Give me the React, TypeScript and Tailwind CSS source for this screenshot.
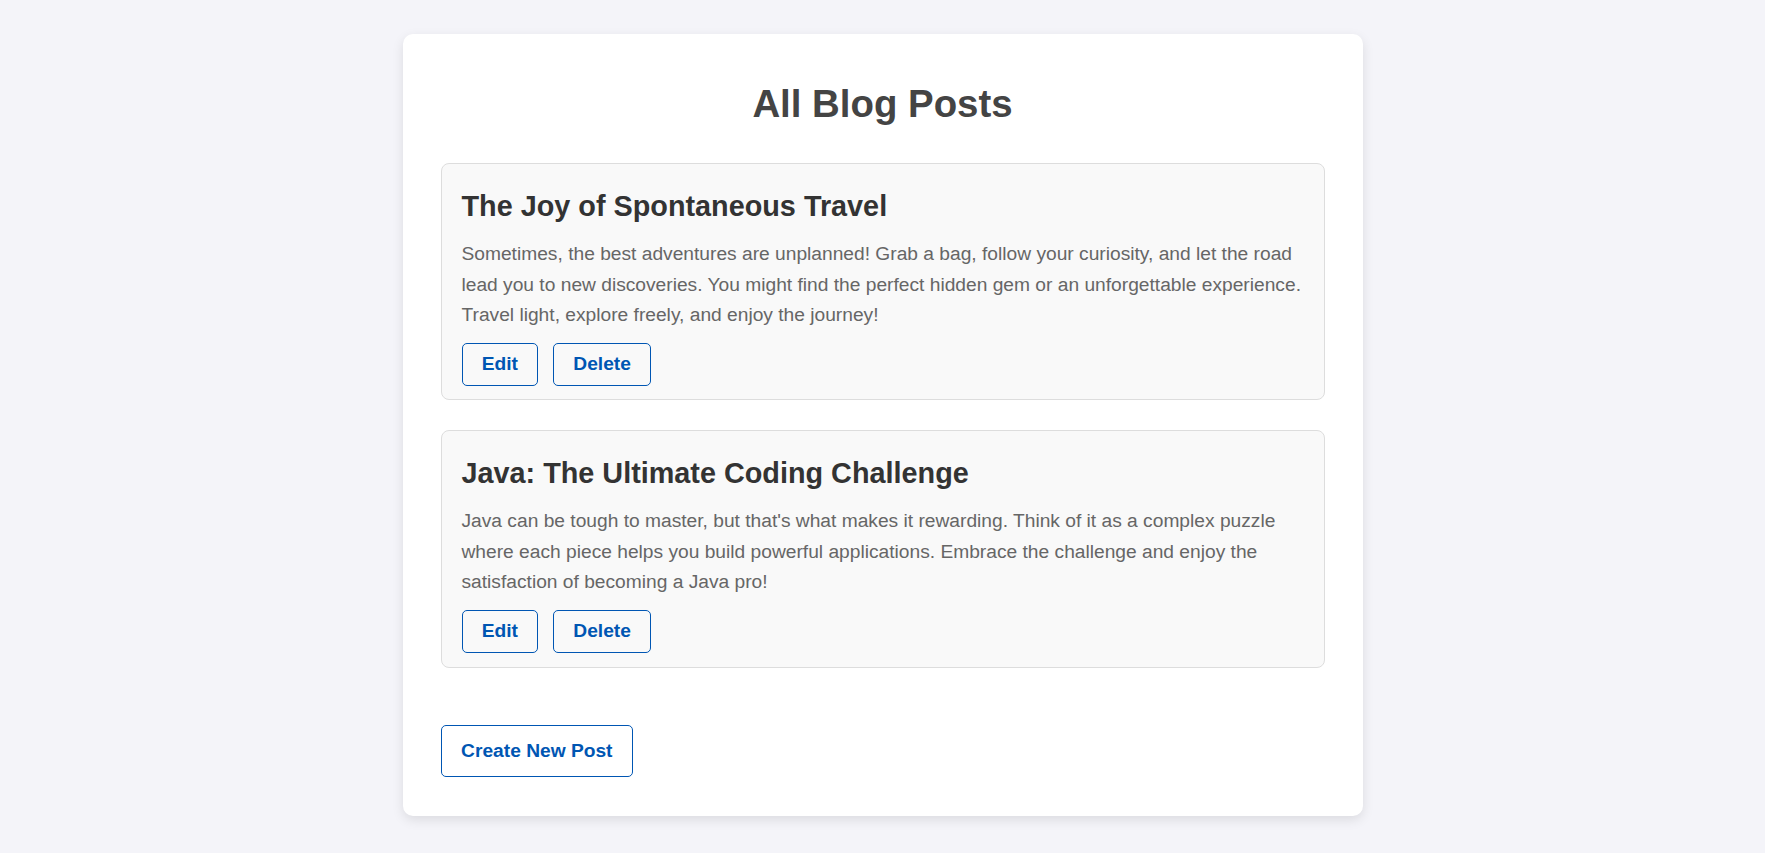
import React from "react";

const posts = [
  {
    title: "The Joy of Spontaneous Travel",
    body:
      "Sometimes, the best adventures are unplanned! Grab a bag, follow your curiosity, and let the road lead you to new discoveries. You might find the perfect hidden gem or an unforgettable experience. Travel light, explore freely, and enjoy the journey!",
  },
  {
    title: "Java: The Ultimate Coding Challenge",
    body:
      "Java can be tough to master, but that's what makes it rewarding. Think of it as a complex puzzle where each piece helps you build powerful applications. Embrace the challenge and enjoy the satisfaction of becoming a Java pro!",
  },
];

function PostCard({ title, body }: { title: string; body: string }) {
  return (
    <div className="rounded-[8px] border border-[#dddddd] bg-[#f9f9f9] px-[20px] pt-[15px] pb-[13.5px]">
      <h2 className="mt-[11px] mb-[16.5px] text-[28.8px] leading-[33px] font-bold text-[#333333]">
        {title}
      </h2>
      <p className="m-0 text-[19.2px] leading-[30.4px] text-[#666666]">{body}</p>
      <div className="mt-[12px] flex gap-[15px]">
        <button className="rounded-[5px] border border-[#0056b3] bg-transparent px-[19.2px] py-[9.7px] text-[19.2px] leading-[22px] font-bold text-[#0056b3]">
          Edit
        </button>
        <button className="rounded-[5px] border border-[#0056b3] bg-transparent px-[19.2px] py-[9.7px] text-[19.2px] leading-[22px] font-bold text-[#0056b3]">
          Delete
        </button>
      </div>
    </div>
  );
}

export default function App() {
  return (
    <div className="min-h-screen bg-[#f4f4f9] pt-[34px] pb-[37px] font-['Liberation_Sans',Arial,sans-serif]">
      <div className="mx-auto w-[960px] rounded-[10px] bg-white px-[38px] pt-[38.4px] pb-[39.4px] shadow-[0_4px_12px_rgba(0,0,0,0.1)]">
        <h1 className="mt-[9.5px] mb-[37px] text-center text-[38.4px] leading-[44px] font-bold text-[#444444]">
          All Blog Posts
        </h1>
        <div className="flex flex-col gap-[29.5px]">
          {posts.map((p) => (
            <PostCard key={p.title} title={p.title} body={p.body} />
          ))}
        </div>
        <div className="mt-[57px] flex">
          <button className="rounded-[5px] border border-[#0056b3] bg-transparent px-[19.6px] py-[14.2px] text-[19.2px] leading-[22px] font-bold text-[#0056b3]">
            Create New Post
          </button>
        </div>
      </div>
    </div>
  );
}
